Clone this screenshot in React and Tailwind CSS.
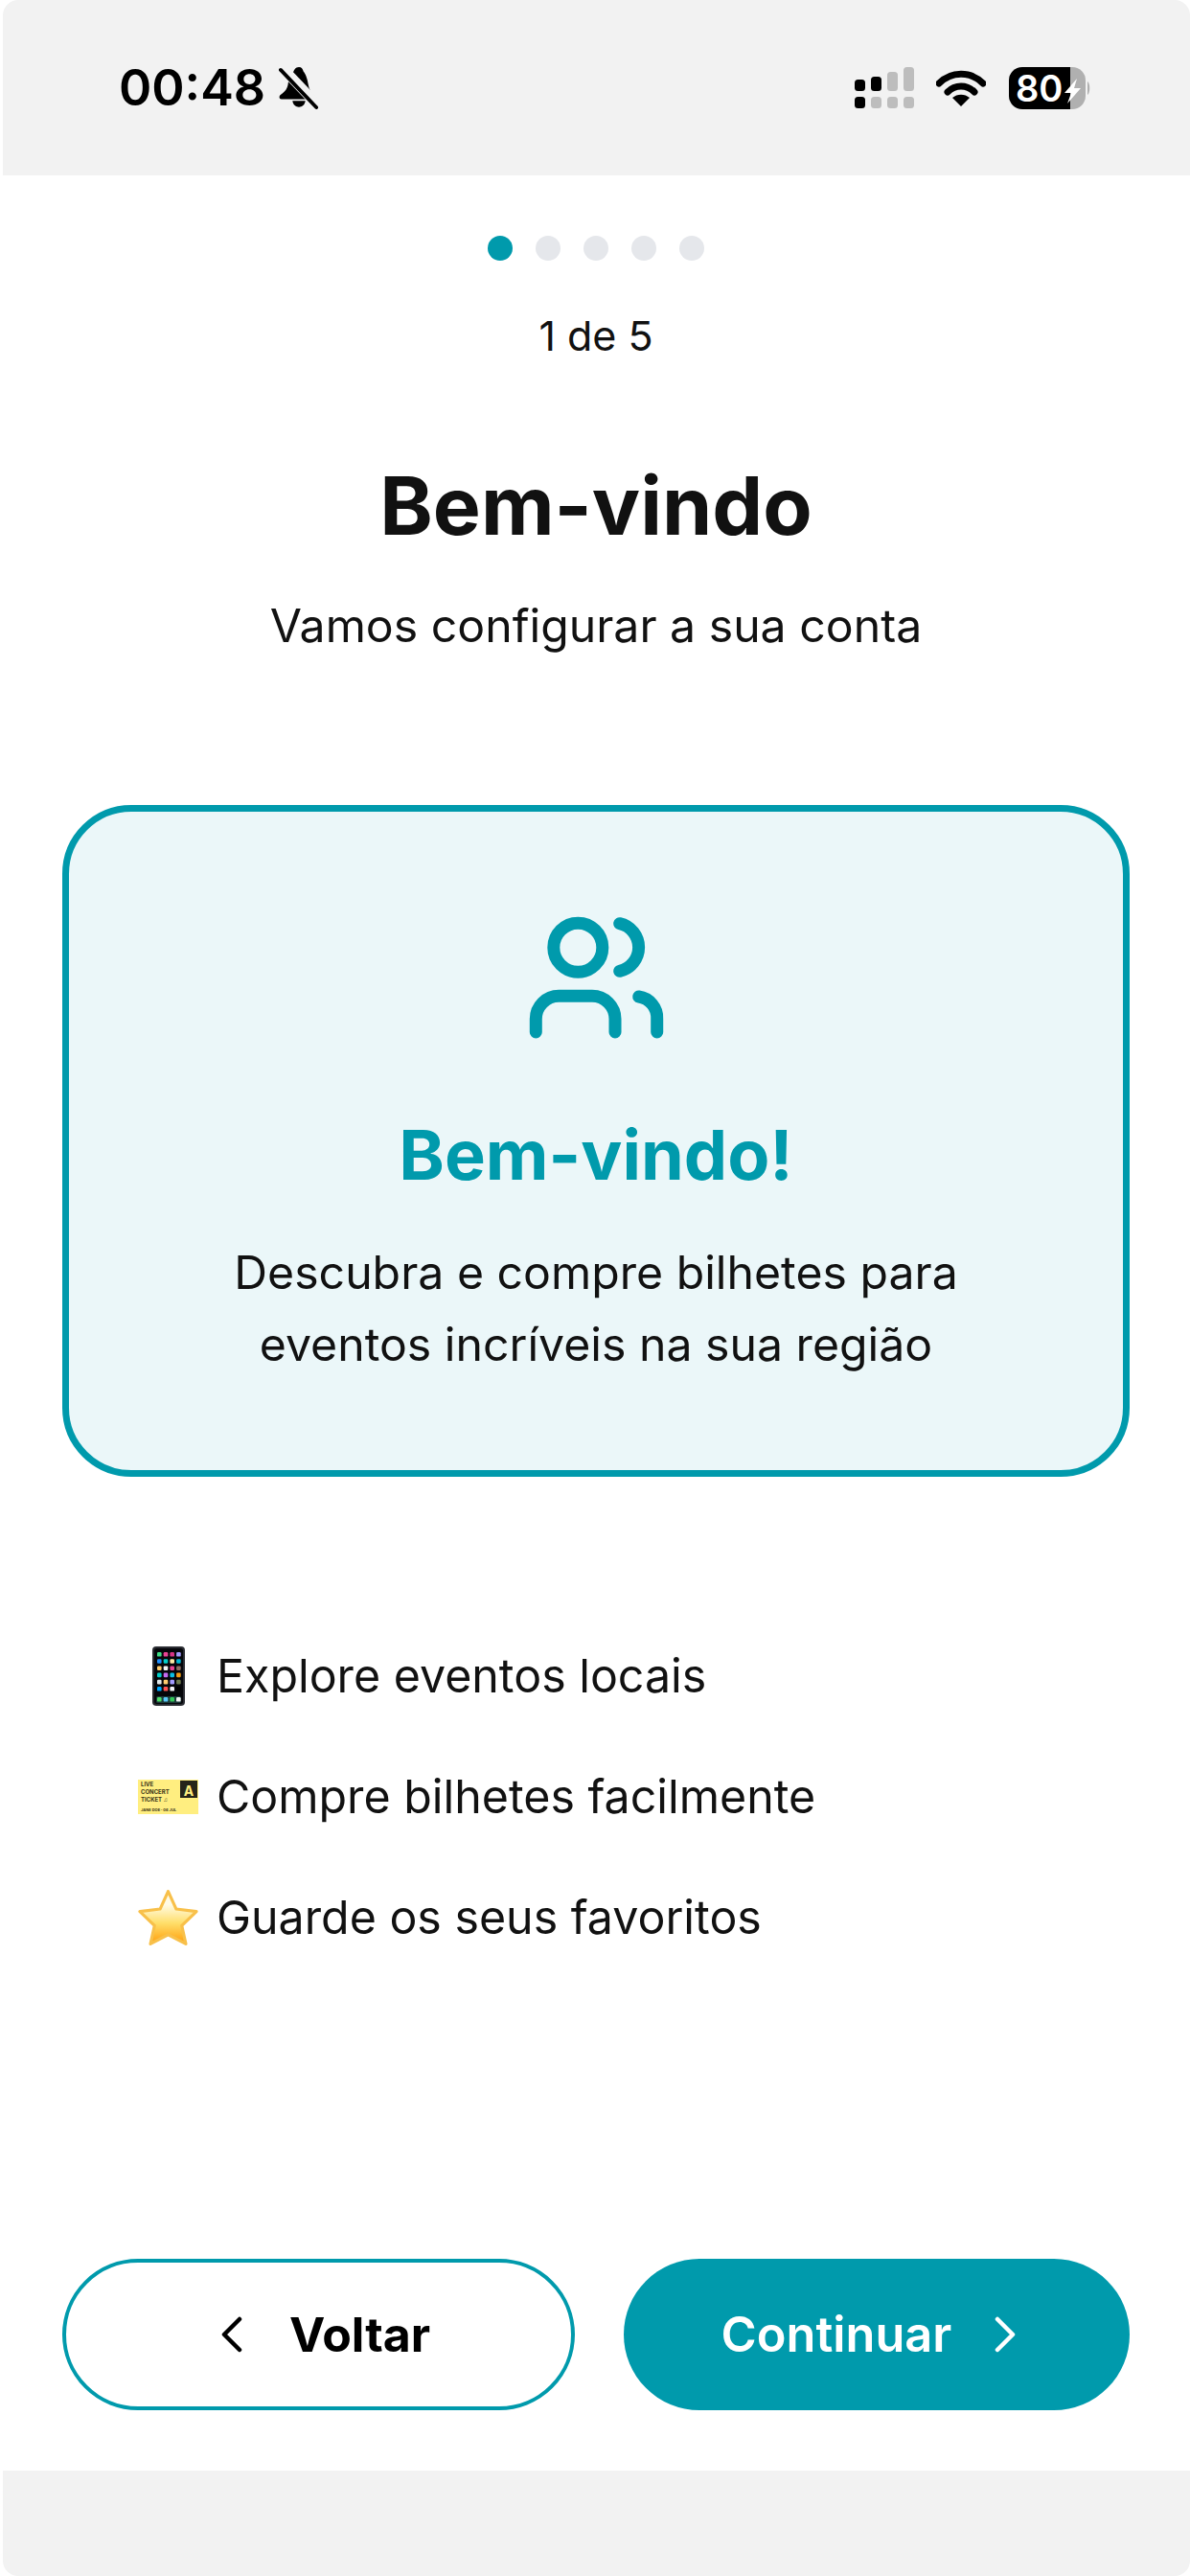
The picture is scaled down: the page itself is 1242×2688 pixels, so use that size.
const PHONE_COLORS = [
  ['#3ddc84', '#e84393', '#d63384', '#a29bfe'],
  ['#1e90ff', '#00cec9', '#ffeaa7', '#00b8d4'],
  ['#fdcb6e', '#f5f5f5', '#e84393', '#8d6e63'],
  ['#00cec9', '#c56cf0', '#0abde3', '#f39c12'],
  ['#dfe6e9', '#fdcb6e', '#a29bfe', '#6d7a4f'],
  ['#00a8ff', '#ff5252', '#f1f2f6', '#000000'],
];

const PhoneEmoji = () => (
  <svg width="34" height="62" viewBox="0 0 34 62">
    <rect width="34" height="62" rx="4" fill="#2b2d33" />
    <rect x="2" y="2" width="30" height="58" rx="2.5" fill="#05060a" />
    {PHONE_COLORS.map((row, r) =>
      row.map((color, c) => <rect key={`${r}-${c}`} x={5 + c * 6.7} y={6 + r * 7.2} width="4.6" height="4.6" rx="1.2" fill={color} />)
    )}
    <rect x="4" y="52" width="26" height="7" rx="1.5" fill="#1c3a3a" />
    <rect x="5" y="53" width="4.6" height="4.6" rx="1.2" fill="#4cd964" />
    <rect x="11.7" y="53" width="4.6" height="4.6" rx="1.2" fill="#5ac8fa" />
    <rect x="18.4" y="53" width="4.6" height="4.6" rx="1.2" fill="#34c759" />
    <rect x="25" y="53" width="4.6" height="4.6" rx="1.2" fill="#f2f2f2" />
  </svg>
);

const TicketEmoji = () => (
  <svg width="63" height="36" viewBox="0 0 63 36">
    <rect width="63" height="36" fill="#ffee80" />
    <rect x="44" y="1" width="18" height="18" fill="#26241a" />
    <text x="53" y="17" textAnchor="middle" fontSize="14" fontWeight="700" fill="#ffee80" fontFamily="Inter, sans-serif">A</text>
    <g fontFamily="Inter, sans-serif" fontWeight="700" fontSize="6" fill="#3a3418">
      <text x="3" y="7">LIVE</text>
      <text x="3" y="15">CONCERT</text>
      <text x="3" y="23">TICKET ♫</text>
      <text x="3" y="33" fontSize="4">JANE DOE · 06 JUL</text>
    </g>
  </svg>
);

const StarEmoji = () => (
  <svg width="63" height="58" viewBox="2 1.5 59 55">
    <defs>
      <linearGradient id="starFill" x1="0" y1="0" x2="0" y2="1">
        <stop offset="0.25" stopColor="#fffbe6" />
        <stop offset="0.6" stopColor="#ffdf6b" />
        <stop offset="1" stopColor="#ff9d0a" />
      </linearGradient>
    </defs>
    <path
      d="M31.5 3L39.5 20.5L59.5 23L45 37L49 55L31.5 46L14 55L18 37L3.5 23L23.5 20.5Z"
      fill="url(#starFill)"
      stroke="#f8c04a"
      strokeWidth="3"
      strokeLinejoin="round"
    />
  </svg>
);

const StatusIcons = () => (
  <div className="flex items-center">
    <svg width="64" height="44" viewBox="0 0 64 44">
      <rect x="1" y="13" width="11" height="12" rx="3.5" fill="#000" />
      <rect x="18" y="10" width="11" height="15" rx="3.5" fill="#000" />
      <rect x="35" y="5" width="11" height="20" rx="3.5" fill="#bdbdbd" />
      <rect x="52" y="0" width="11" height="25" rx="3.5" fill="#bdbdbd" />
      <rect x="1" y="31" width="11" height="12" rx="3.5" fill="#000" />
      <rect x="18" y="31" width="11" height="12" rx="3.5" fill="#bdbdbd" />
      <rect x="35" y="31" width="11" height="12" rx="3.5" fill="#bdbdbd" />
      <rect x="52" y="31" width="11" height="12" rx="3.5" fill="#bdbdbd" />
    </svg>
    <svg className="ml-[22px]" width="52" height="38" viewBox="0 0 52 38">
      <path d="M3 14C16 1 36 1 49 14" fill="none" stroke="#000" strokeWidth="7" strokeLinecap="round" />
      <path d="M12 23C20 15 32 15 40 23" fill="none" stroke="#000" strokeWidth="7" strokeLinecap="round" />
      <path d="M26 38L17 29C22 24.5 30 24.5 35 29Z" fill="#000" />
    </svg>
    <svg className="ml-[24px]" width="86" height="44" viewBox="0 0 86 44">
      <path d="M14 0H64V44H14A14 14 0 0 1 0 30V14A14 14 0 0 1 14 0Z" fill="#000" />
      <path d="M64 0H66A14 14 0 0 1 80 14V30A14 14 0 0 1 66 44H64Z" fill="#b0b0b0" />
      <path d="M82 15C85 17 85 27 82 29Z" fill="#b0b0b0" />
      <text x="7" y="35.5" fontSize="38" fontWeight="600" fill="#fff" fontFamily="Inter, sans-serif">80</text>
      <path d="M71 12L58 27H65L61 38L75 22H68Z" fill="#fff" />
    </svg>
  </div>
);

const BellOff = () => (
  <svg width="42" height="46" viewBox="0 0 44 46">
    <path d="M22 0C18 0 17 3 16 5C12 8 11 13 10 19C9 25 5 28 1 31C0 33 1 35 3 35H36C39 35 40 33 39 31C35 28 33 24 32 18C31 12 29 7 27 5C26 2 25 0 22 0Z" fill="#000" />
    <path d="M15 37H29C28 46 16 46 15 37Z" fill="#000" />
    <path d="M2 -1L44 43" stroke="#f2f2f2" strokeWidth="11" />
    <path d="M2 3L41 44" stroke="#000" strokeWidth="4" strokeLinecap="round" />
  </svg>
);

const features = [
  { icon: <PhoneEmoji />, label: 'Explore eventos locais' },
  { icon: <TicketEmoji />, label: 'Compre bilhetes facilmente' },
  { icon: <StarEmoji />, label: 'Guarde os seus favoritos' },
];

export default function App() {
  return (
    <div className="w-[1242px] h-[2688px] bg-white flex flex-col font-['Inter',sans-serif] text-[#111111] overflow-hidden">
      <div className="h-[183px] ml-[3px] bg-[#f2f2f2] rounded-t-[16px] shrink-0 flex items-center justify-between pl-[121px] pr-[103px]">
        <div className="flex items-center gap-[14px]">
          <span className="text-[52px] font-semibold leading-none text-black">00:48</span>
          <BellOff />
        </div>
        <StatusIcons />
      </div>

      <div className="flex flex-col items-center pt-[63px] pl-[2px]">
        <div className="flex gap-[24px]">
          <span className="w-[26px] h-[26px] rounded-full bg-[#009aac]" />
          <span className="w-[26px] h-[26px] rounded-full bg-[#e5e7eb]" />
          <span className="w-[26px] h-[26px] rounded-full bg-[#e5e7eb]" />
          <span className="w-[26px] h-[26px] rounded-full bg-[#e5e7eb]" />
          <span className="w-[26px] h-[26px] rounded-full bg-[#e5e7eb]" />
        </div>
        <p className="mt-[50px] text-[43px] leading-[56px]">1 de 5</p>
        <h1 className="mt-[100px] text-[84px] leading-[100px] font-bold">Bem-vindo</h1>
        <p className="mt-[43px] text-[48.2px] leading-[64px]">Vamos configurar a sua conta</p>
      </div>

      <div className="ml-[65px] mr-[63px] mt-[155px] h-[701px] border-[7px] border-[#009aac] rounded-[72px] bg-[#ebf7f9] flex flex-col items-center pt-[104px]">
        <svg width="145" height="135" viewBox="0 0 145 135" fill="none" stroke="#009aac" strokeWidth="13" strokeLinecap="round">
          <circle cx="53.3" cy="37.7" r="25.5" />
          <path d="M96.7 12.7A25.4 25.4 0 0 1 96.7 62.3" />
          <path d="M9.3 126V112.3A24 24 0 0 1 33.3 88.3H68A24 24 0 0 1 92 112.3V126" />
          <path d="M116.7 89A22 22 0 0 1 135.7 112V126" />
        </svg>
        <h2 className="mt-[75px] text-[72px] leading-[88px] font-bold text-[#009aac]">Bem-vindo!</h2>
        <p className="mt-[41px] text-[48.2px] leading-[75px] text-center">
          Descubra e compre bilhetes para
          <br />
          eventos incríveis na sua região
        </p>
      </div>

      <ul className="mt-[177px] pl-[144px] flex flex-col gap-[64px]">
        {features.map((item) => (
          <li key={item.label} className="h-[62px] flex items-center gap-[19px]">
            <span className="w-[63px] flex justify-center">{item.icon}</span>
            <span className="text-[48.3px] leading-[62px]">{item.label}</span>
          </li>
        ))}
      </ul>

      <div className="mt-auto ml-[65px] mr-[63px] flex gap-[51px]">
        <button className="w-[535px] h-[158px] rounded-full border-[4px] border-[#009aac] bg-white flex items-center justify-center gap-[48px] pl-[14px] text-[50px] font-bold text-black">
          <svg width="24" height="38" viewBox="0 0 24 38" fill="none" stroke="#000" strokeWidth="4.5" strokeLinecap="round" strokeLinejoin="round">
            <path d="M20 3L4 19L20 35" />
          </svg>
          Voltar
        </button>
        <button className="w-[528px] h-[158px] rounded-full bg-[#009aac] flex items-center justify-center gap-[44px] pr-[16px] text-[50.5px] font-semibold text-white">
          Continuar
          <svg width="24" height="38" viewBox="0 0 24 38" fill="none" stroke="#fff" strokeWidth="4.5" strokeLinecap="round" strokeLinejoin="round">
            <path d="M4 3L20 19L4 35" />
          </svg>
        </button>
      </div>

      <div className="mt-[63px] h-[110px] ml-[3px] bg-[#f2f2f2] rounded-b-[16px] shrink-0" />
    </div>
  );
}
